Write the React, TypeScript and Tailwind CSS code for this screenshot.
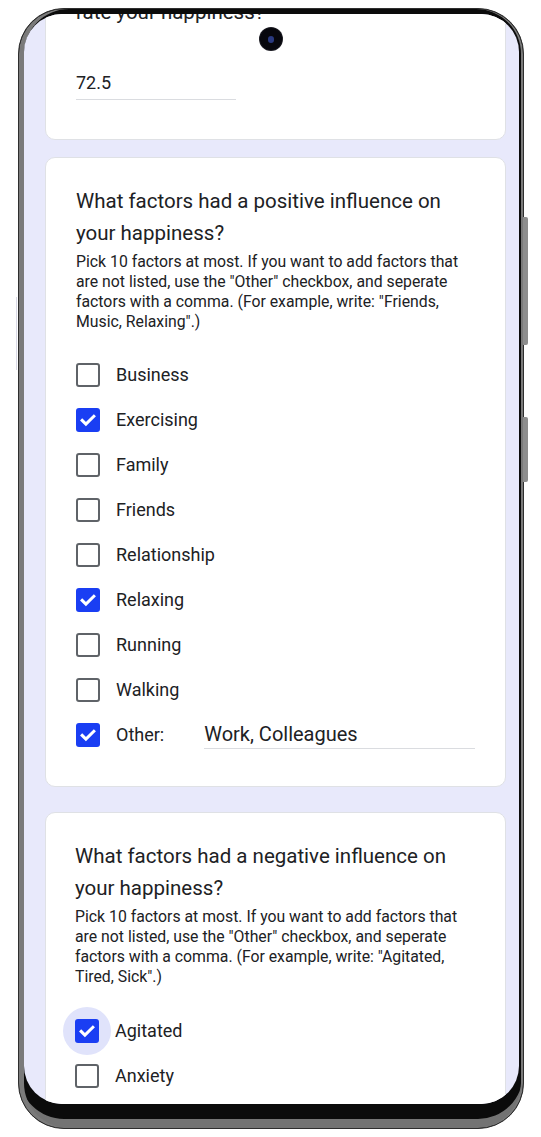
import React from "react";

type Option = { label: string; checked?: boolean; halo?: boolean };

const POSITIVE: Option[] = [
  { label: "Business" },
  { label: "Exercising", checked: true },
  { label: "Family" },
  { label: "Friends" },
  { label: "Relationship" },
  { label: "Relaxing", checked: true },
  { label: "Running" },
  { label: "Walking" },
];

const NEGATIVE: Option[] = [
  { label: "Agitated", checked: true, halo: true },
  { label: "Anxiety" },
];

const FONT = "font-['Roboto','Liberation_Sans',sans-serif]";

export default function App() {
  return (
    <div className={`relative h-[1137px] w-[541px] overflow-hidden bg-white ${FONT}`}>
      {/* phone body */}
      <div className="ml-[18px] mt-[8px] h-[1121px] w-[506px] rounded-[46px] border border-[#2e2e2e] bg-[#0b0b0b] pb-[24px] pl-[5px] pr-[4px] pt-[5px] shadow-[inset_5px_0_0_#7a7a7a,inset_-2px_0_0_#7a7a7a,inset_0_-9px_0_#737373]">
        <div className="h-full overflow-hidden rounded-[38px] bg-[#e8e9fb]">
          <div className="-mt-[46px] pl-[21px] pr-[13px]">
            {/* card 1 (scrolled partly away) */}
            <div className="rounded-[10px] border border-[#dfe1e5] bg-white pb-[39px] pl-[30px] pr-[30px] pt-[27px]">
              <Title lines={["rate your happiness?"]} />
              <div className="mt-[43px] w-[160px] border-b border-[#dadce0] pb-[4px] text-[18px] leading-[24px] text-[#202124]">
                72.5
              </div>
            </div>

            {/* card 2 */}
            <div className="mt-[17px] rounded-[10px] border border-[#dfe1e5] bg-white pb-[29px] pl-[30px] pr-[30px] pt-[27px]">
              <Title lines={["What factors had a positive influence on", "your happiness?"]} />
              <Description
                lines={[
                  "Pick 10 factors at most. If you want to add factors that",
                  'are not listed, use the "Other" checkbox, and seperate',
                  'factors with a comma. (For example, write: "Friends,',
                  'Music, Relaxing".)',
                ]}
              />
              <div className="mt-[20px] flex flex-col">
                {POSITIVE.map((o) => (
                  <Row key={o.label} option={o} />
                ))}
                <div className="flex h-[45px] items-center">
                  <Checkbox checked />
                  <span className="ml-[16px] text-[18px] text-[#202124]">Other:</span>
                  <div className="ml-[40px] flex-1 border-b border-[#dadce0] pb-[1px] text-[20px] leading-[26px] text-[#202124]">
                    Work, Colleagues
                  </div>
                </div>
              </div>
            </div>

            {/* card 3 */}
            <div className="mt-[25px] rounded-[10px] border border-[#dfe1e5] bg-white pb-[29px] pl-[29px] pr-[30px] pt-[27px]">
              <Title lines={["What factors had a negative influence on", "your happiness?"]} />
              <Description
                lines={[
                  "Pick 10 factors at most. If you want to add factors that",
                  'are not listed, use the "Other" checkbox, and seperate',
                  'factors with a comma. (For example, write: "Agitated,',
                  'Tired, Sick".)',
                ]}
              />
              <div className="mt-[21px] flex flex-col">
                {NEGATIVE.map((o) => (
                  <Row key={o.label} option={o} />
                ))}
                <div className="h-[45px]" />
              </div>
            </div>
          </div>
        </div>
      </div>

      {/* camera */}
      <div className="absolute left-[260px] top-[28px] flex h-[22px] w-[22px] items-center justify-center rounded-full bg-[#07070d] shadow-[0_0_0_1px_#1b1b22]">
        <div className="h-[7px] w-[6px] rounded-full bg-[#2a3a80]" />
      </div>

      {/* side buttons */}
      <div className="absolute left-[523px] top-[217px] h-[128px] w-[5px] rounded-r-[2px] bg-[#8d8d8d]" />
      <div className="absolute left-[523px] top-[417px] h-[65px] w-[5px] rounded-r-[2px] bg-[#8d8d8d]" />
      <div className="absolute left-[16px] top-[297px] h-[73px] w-[1px] bg-[#d9d9e6]" />
    </div>
  );
}

function Title({ lines }: { lines: string[] }) {
  return (
    <div className="text-[20.5px] leading-[32px] text-[#202124]">
      {lines.map((l) => (
        <div key={l} className="whitespace-nowrap">
          {l}
        </div>
      ))}
    </div>
  );
}

function Description({ lines }: { lines: string[] }) {
  return (
    <div className="mt-[3px] text-[15.8px] leading-[20px] text-[#202124]">
      {lines.map((l) => (
        <div key={l} className="whitespace-nowrap">
          {l}
        </div>
      ))}
    </div>
  );
}

function Row({ option }: { option: Option }) {
  return (
    <div className="flex h-[45px] items-center">
      <div className="relative flex h-[24px] w-[24px] items-center justify-center">
        {option.halo && <div className="absolute h-[48px] w-[48px] rounded-full bg-[#e0e3fb]" />}
        <Checkbox checked={option.checked} />
      </div>
      <span className="ml-[16px] text-[18px] text-[#202124]">{option.label}</span>
    </div>
  );
}

function Checkbox({ checked }: { checked?: boolean }) {
  if (checked) {
    return (
      <span className="relative flex h-[24px] w-[24px] items-center justify-center rounded-[3px] bg-[#1a3ef3]">
        <svg width="20" height="20" viewBox="0 0 24 24" fill="none">
          <path d="M5 12.5l4.5 4.5L19 7.5" stroke="white" strokeWidth="3.6" strokeLinecap="square" />
        </svg>
      </span>
    );
  }
  return <span className="relative block h-[24px] w-[24px] rounded-[3px] border-[2.5px] border-[#5f6368]" />;
}
